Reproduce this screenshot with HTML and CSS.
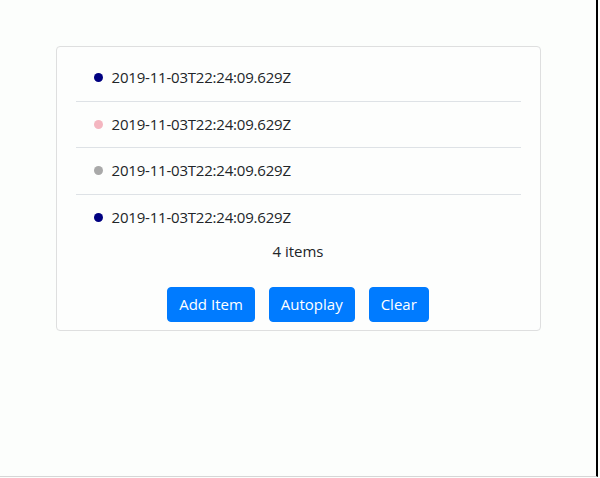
FILE: index.html
```html
<!DOCTYPE html>
<html>
<head>
<meta charset="utf-8">
<link rel="stylesheet" href="styles.css">
</head>
<body>
<div class="frame">
  <div class="card">
    <ul class="list">
      <li class="item"><span class="dot navy"></span><span class="stamp">2019-11-03T22:24:09.629Z</span></li>
      <li class="item"><span class="dot pink"></span><span class="stamp">2019-11-03T22:24:09.629Z</span></li>
      <li class="item"><span class="dot gray"></span><span class="stamp">2019-11-03T22:24:09.629Z</span></li>
      <li class="item"><span class="dot navy"></span><span class="stamp">2019-11-03T22:24:09.629Z</span></li>
    </ul>
    <div class="count">4 items</div>
    <div class="actions">
      <button class="btn">Add Item</button>
      <button class="btn">Autoplay</button>
      <button class="btn">Clear</button>
    </div>
  </div>
</div>
</body>
</html>
```
FILE: styles.css
```css
html, body {
  margin: 0;
  padding: 0;
  background: #fcfefc;
}
.frame {
  width: 598px;
  height: 477px;
  border-right: 2px solid #000;
  border-bottom: 1px solid #d6d6d6;
  padding-top: 46px;
  box-sizing: border-box;
  font-family: "Open Sans", "Noto Sans", sans-serif;
  font-size: 15px;
  color: #212529;
}
.card {
  width: 485px;
  margin: 0 auto;
  box-sizing: border-box;
  border: 1px solid #dedfdf;
  border-radius: 4px;
  padding: 8px 19px;
  background: #fdfefd;
}
.list {
  list-style: none;
  margin: 0;
  padding: 0;
}
.item {
  display: flex;
  align-items: center;
  padding: 12px 0 12px 18px;
  line-height: 21.5px;
  border-bottom: 1px solid #dee2e6;
}
.item:last-child {
  border-bottom: none;
}
.dot {
  width: 9px;
  height: 9px;
  border-radius: 50%;
  margin-right: 9px;
  flex: none;
}
.navy { background: #000080; }
.pink { background: #f4b6c0; }
.gray { background: #a9a9a9; }
.stamp {
  letter-spacing: -0.2px;
}
.count {
  text-align: center;
  line-height: 22px;
}
.actions {
  display: flex;
  justify-content: center;
  gap: 14px;
  margin-top: 25px;
}
.btn {
  font-family: inherit;
  font-size: 15px;
  line-height: 21px;
  color: #fff;
  background: #007bff;
  border: 1px solid #007bff;
  border-radius: 4px;
  padding: 6px 11px;
  cursor: pointer;
}
```
